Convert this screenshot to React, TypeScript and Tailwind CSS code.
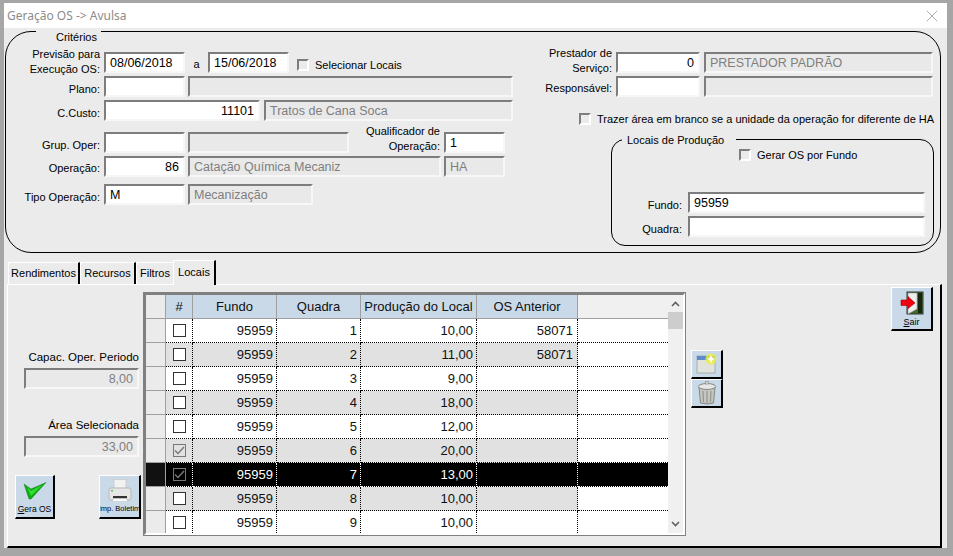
import type { ReactNode } from 'react'
import { X } from 'lucide-react'

const rows = [
  { fundo: '95959', quadra: '1', prod: '10,00', os: '58071', checked: false },
  { fundo: '95959', quadra: '2', prod: '11,00', os: '58071', checked: false },
  { fundo: '95959', quadra: '3', prod: '9,00', os: '', checked: false },
  { fundo: '95959', quadra: '4', prod: '18,00', os: '', checked: false },
  { fundo: '95959', quadra: '5', prod: '12,00', os: '', checked: false },
  { fundo: '95959', quadra: '6', prod: '20,00', os: '', checked: true },
  { fundo: '95959', quadra: '7', prod: '13,00', os: '', checked: true },
  { fundo: '95959', quadra: '8', prod: '10,00', os: '', checked: false },
  { fundo: '95959', quadra: '9', prod: '10,00', os: '', checked: false },
]

function Field({ width, value = '', right, disabled }: { width: string; value?: string; right?: boolean; disabled?: boolean }) {
  return (
    <div
      className={`${width} h-[21px] shrink-0 border-2 border-t-[#7d7d7d] border-l-[#7d7d7d] border-r-[#f7f7f7] border-b-[#f7f7f7] px-[4px] pt-[1px] flex items-center text-[12.5px] leading-none whitespace-nowrap overflow-hidden ${
        disabled ? 'bg-[#e9e9e9] text-[#7f7f7f]' : 'bg-white text-black'
      } ${right ? 'justify-end' : ''}`}
    >
      {value}
    </div>
  )
}

// labels sit a little below the centre of their field, as in the original form
function Label({ width, children }: { width: string; children: ReactNode }) {
  return <div className={`${width} shrink-0 text-right text-[11px] leading-[15px] text-black`}>{children}</div>
}

function Check({ label, className = '' }: { label: string; className?: string }) {
  return (
    <div className={`flex items-center h-[14px] text-[11px] text-black whitespace-nowrap ${className}`}>
      <span className="w-[12px] h-[12px] mr-[6px] border-2 border-t-[#7d7d7d] border-l-[#7d7d7d] border-r-white border-b-white bg-[#ebebeb]" />
      {label}
    </div>
  )
}

function ToolButton({ width, height, children, className = '' }: { width: string; height: string; children: ReactNode; className?: string }) {
  return (
    <div
      className={`${width} ${height} shrink-0 bg-[#c9d9e8] border border-t-white border-l-white border-r-black border-b-black border-r-2 border-b-2 flex flex-col items-center overflow-hidden ${className}`}
    >
      {children}
    </div>
  )
}

function CheckIcon() {
  return (
    <svg width="24" height="18" viewBox="0 0 24 18">
      <path d="M1 2 L8 7 L23 0.5 L8 17 L6 17 Z" fill="#12a818" stroke="#0c8a10" strokeWidth="0.5" />
      <path d="M4 5 L8 9 L19 3 L8 14 Z" fill="#2fe02f" />
    </svg>
  )
}

function PrinterIcon() {
  return (
    <svg width="24" height="24" viewBox="0 0 24 24">
      <rect x="6" y="0.5" width="12" height="11" fill="#f2f2f2" stroke="#d0d0d0" />
      <path d="M3 9 H21 Q23 9 23 12 V18 Q23 21 21 21 H3 Q1 21 1 18 V12 Q1 9 3 9 Z" fill="#e6e6e6" stroke="#b8b8b8" />
      <rect x="5" y="17" width="14" height="2.5" fill="#333333" />
      <rect x="5" y="19.5" width="14" height="3" fill="#fafafa" stroke="#c4c4c4" strokeWidth="0.5" />
      <rect x="3" y="11" width="2" height="1.5" fill="#57c957" />
    </svg>
  )
}

function ExitIcon() {
  return (
    <svg width="24" height="24" viewBox="0 0 24 24">
      <rect x="7" y="1" width="16" height="22" fill="#3f6a2c" stroke="#333333" />
      <rect x="18" y="2" width="4" height="20" fill="#16260f" />
      <path d="M8 2 H17 V18 L8 23 Z" fill="#eeeeee" stroke="#9a9a9a" strokeWidth="0.6" />
      <path d="M1 9 H8 V5.5 L15 12 L8 17.5 V14.5 H1 Z" fill="#f00010" stroke="#a80008" strokeWidth="0.6" />
    </svg>
  )
}

function NewIcon() {
  return (
    <svg width="22" height="22" viewBox="0 0 22 22">
      <rect x="1" y="3" width="18" height="17" fill="#dfe3dc" stroke="#a8adb0" />
      <rect x="1" y="3" width="18" height="4" fill="#5c8ccc" />
      <circle cx="15" cy="6" r="5.5" fill="#eef03a" opacity="0.8" />
      <path d="M15 2 L16.2 4.8 L19 6 L16.2 7.2 L15 10 L13.8 7.2 L11 6 L13.8 4.8 Z" fill="#ffffff" />
    </svg>
  )
}

function TrashIcon() {
  return (
    <svg width="20" height="24" viewBox="0 0 20 24">
      <path d="M2 6 H18 L16.5 22 Q10 24 3.5 22 Z" fill="#c4c6c2" stroke="#85877f" />
      <ellipse cx="10" cy="5.5" rx="8.5" ry="3" fill="#e6e6e6" stroke="#85877f" />
      <rect x="8.5" y="0.5" width="3" height="2.5" fill="#d8d8d8" stroke="#85877f" strokeWidth="0.6" />
      <path d="M6 10 L6.5 21 M10 10 V22 M14 10 L13.5 21" stroke="#8c8e86" strokeWidth="1" fill="none" />
    </svg>
  )
}

function Grid() {
  return (
    <div className="w-[543px] h-[244px] mt-[7px] ml-0 shrink-0 border border-[#808080] bg-[#ebebeb]">
      <div className="w-[541px] h-[242px] border-2 border-t-[#808080] border-l-[#808080] border-r-white border-b-white flex overflow-hidden">
        <div className="w-[522px] h-[238px] shrink-0 overflow-hidden text-[13px] text-[#111111]">
          <div className="flex h-[24px] bg-[#f0f0f0] border-b border-[#a0a0a0] text-center leading-[23px]">
            <div className="w-[20px] shrink-0 bg-[#ebebeb] border-r border-[#a0a0a0]" />
            <div className="w-[27px] shrink-0 bg-[#c9d9e8] border-r border-[#a0a0a0]">#</div>
            <div className="w-[84px] shrink-0 bg-[#c9d9e8] border-r border-[#a0a0a0]">Fundo</div>
            <div className="w-[84px] shrink-0 bg-[#c9d9e8] border-r border-[#a0a0a0]">Quadra</div>
            <div className="w-[116px] shrink-0 bg-[#c9d9e8] border-r border-[#a0a0a0] whitespace-nowrap">Produção do Local</div>
            <div className="w-[101px] shrink-0 bg-[#c9d9e8] border-r border-[#a0a0a0]">OS Anterior</div>
          </div>
          {rows.map((row, i) => {
            const selected = i === 6
            const rowBg = selected ? 'bg-black text-white' : i % 2 === 1 ? 'bg-[#e1e1e1]' : 'bg-white'
            const line = selected ? 'border-white' : 'border-black'
            return (
              <div key={row.quadra} className={`flex h-[24px] leading-[23px] ${selected ? 'bg-black' : 'bg-white'}`}>
                <div className={`w-[20px] shrink-0 border-r border-b border-[#a0a0a0] ${selected ? 'bg-[#111111]' : 'bg-[#ebebeb]'}`} />
                <div className={`w-[27px] shrink-0 border-r border-b border-dotted ${line} ${rowBg} flex items-center justify-center pb-[1px]`}>
                  {row.checked ? (
                    <span className="w-[13px] h-[13px] border border-[#777777] flex items-center justify-center">
                      <svg width="11" height="9" viewBox="0 0 11 9">
                        <path d="M1 4.5 L4 7.5 L10 1" fill="none" stroke="#777777" strokeWidth="1.4" />
                      </svg>
                    </span>
                  ) : (
                    <span className="w-[13px] h-[13px] border border-[#333333] bg-white" />
                  )}
                </div>
                <div className={`w-[84px] shrink-0 border-r border-b border-dotted ${line} ${rowBg} text-right pr-[3px]`}>{row.fundo}</div>
                <div className={`w-[84px] shrink-0 border-r border-b border-dotted ${line} ${rowBg} text-right pr-[3px]`}>{row.quadra}</div>
                <div className={`w-[116px] shrink-0 border-r border-b border-dotted ${line} ${rowBg} text-right pr-[3px]`}>{row.prod}</div>
                <div className={`w-[101px] shrink-0 border-r border-b border-dotted ${line} ${rowBg} text-right pr-[4px]`}>{row.os}</div>
                <div className={`flex-1 border-b border-dotted ${selected ? 'border-white bg-black' : 'border-black bg-white'}`} />
              </div>
            )
          })}
        </div>
        {/* scrollbar */}
        <div className="w-[15px] h-[238px] shrink-0 bg-[#f0f0f0] flex flex-col items-center">
          <svg className="mt-[6px] shrink-0" width="9" height="6" viewBox="0 0 9 6">
            <path d="M1 5 L4.5 1.5 L8 5" fill="none" stroke="#606060" strokeWidth="1.6" />
          </svg>
          <div className="w-[15px] h-[17px] mt-[5px] bg-[#cdcdcd]" />
          <svg className="mt-auto mb-[6px] shrink-0" width="9" height="6" viewBox="0 0 9 6">
            <path d="M1 1 L4.5 4.5 L8 1" fill="none" stroke="#606060" strokeWidth="1.6" />
          </svg>
        </div>
      </div>
    </div>
  )
}

export default function App() {
  return (
    <div className="w-[953px] h-[556px] bg-[#a6a6a6] pt-[3px] pl-[4px] overflow-hidden font-['Liberation_Sans',Arial,sans-serif]">
      <div className="w-[943px] h-[545px] bg-[#ebebeb] flex flex-col">
        {/* title bar */}
        <div className="h-[25px] shrink-0 bg-white flex items-center justify-between pl-[3px] pr-[5px]">
          <span className="text-[12px] text-[#8c8c8c] font-['Noto_Sans',sans-serif]">Geração OS -&gt; Avulsa</span>
          <X size={20} strokeWidth={0.8} className="text-[#808080]" />
        </div>

        {/* Critérios */}
        <div className="relative ml-[1px] mt-[3px] w-[936px] h-[222px] shrink-0 rounded-[26px] border border-black flex pt-[20px]">
          <div className="absolute left-[30px] top-[-1px] w-[65px] h-[14px] bg-[#ebebeb] text-[11px] leading-[12px] pl-[20px] whitespace-nowrap">Critérios</div>

          <div className="w-[524px] shrink-0 flex flex-col">
            <div className="flex items-end h-[21px]">
              <Label width="w-[94px] mr-[4px] mb-[-4px]">Previsão para Execução OS:</Label>
              <Field width="w-[81px]" value="08/06/2018" />
              <span className="w-[23px] text-center text-[11px] mb-[1px]">a</span>
              <Field width="w-[81px]" value="15/06/2018" />
              <Check label="Selecionar Locais" className="ml-[8px] mb-[1px]" />
            </div>
            <div className="flex items-center mt-[3px] h-[21px]">
              <Label width="w-[94px] mr-[4px] mt-[5px]">Plano:</Label>
              <Field width="w-[81px]" />
              <Field width="w-[325px] ml-[3px]" disabled />
            </div>
            <div className="flex items-center mt-[3px] h-[21px]">
              <Label width="w-[94px] mr-[4px] mt-[5px]">C.Custo:</Label>
              <Field width="w-[156px]" value="11101" right />
              <Field width="w-[249px] ml-[4px]" value="Tratos de Cana Soca" disabled />
            </div>
            <div className="flex items-end mt-[11px] h-[21px]">
              <Label width="w-[94px] mr-[4px]">Grup. Oper:</Label>
              <Field width="w-[81px]" />
              <Field width="w-[161px] ml-[3px]" disabled />
              <Label width="w-[91px] mb-[-1px]">Qualificador de Operação:</Label>
              <Field width="w-[61px] ml-[4px]" value="1" />
            </div>
            <div className="flex items-center mt-[3px] h-[21px]">
              <Label width="w-[94px] mr-[4px] mt-[4px]">Operação:</Label>
              <Field width="w-[81px]" value="86" right />
              <Field width="w-[253px] ml-[3px]" value="Catação Química Mecaniz" disabled />
              <Field width="w-[61px] ml-[3px]" value="HA" disabled />
            </div>
            <div className="flex items-center mt-[7px] h-[21px]">
              <Label width="w-[94px] mr-[4px] mt-[5px]">Tipo Operação:</Label>
              <Field width="w-[81px]" value="M" />
              <Field width="w-[125px] ml-[3px]" value="Mecanização" disabled />
            </div>
          </div>

          <div className="flex-1 flex flex-col">
            <div className="flex items-end h-[21px]">
              <Label width="w-[82px] mr-[4px] mb-[-3px]">Prestador de Serviço:</Label>
              <Field width="w-[84px]" value="0" right />
              <Field width="w-[229px] ml-[4px]" value="PRESTADOR PADRÃO" disabled />
            </div>
            <div className="flex items-center mt-[3px] h-[21px]">
              <Label width="w-[82px] mr-[4px] mt-[3px]">Responsável:</Label>
              <Field width="w-[84px]" />
              <Field width="w-[229px] ml-[4px]" disabled />
            </div>
            <Check label="Trazer área em branco se a unidade da operação for diferente de HA" className="ml-[49px] mt-[15px] mb-[-1px]" />

            {/* Locais de Produção */}
            <div className="relative mt-[14px] ml-[81px] w-[323px] h-[107px] rounded-[14px] border border-black">
              <div className="absolute left-[10px] top-[-7px] w-[114px] h-[14px] bg-[#ebebeb] text-[11px] leading-[14px] pl-[5px]">Locais de Produção</div>
              <Check label="Gerar OS por Fundo" className="ml-[127px] mt-[8px]" />
              <div className="flex items-center mt-[30px] h-[21px]">
                <Label width="w-[70px] mr-[6px] mt-[5px]">Fundo:</Label>
                <Field width="w-[237px]" value="95959" />
              </div>
              <div className="flex items-center mt-[3px] h-[21px]">
                <Label width="w-[70px] mr-[6px] mt-[5px]">Quadra:</Label>
                <Field width="w-[237px]" />
              </div>
            </div>
          </div>
        </div>

        {/* tabs */}
        <div className="flex items-end h-[25px] mt-[6px] ml-[4px] shrink-0 text-[11px] text-black">
          <div className="h-[22px] w-[72px] border-t border-l border-t-white border-l-white border-r-2 border-r-black flex items-center justify-center">Rendimentos</div>
          <div className="h-[22px] w-[56px] border-t border-l border-t-white border-l-white border-r-2 border-r-black flex items-center justify-center">Recursos</div>
          <div className="h-[22px] w-[37px] border-t border-l border-t-white border-l-white flex items-center justify-center">Filtros</div>
          <div className="h-[25px] w-[43px] border-t border-l border-t-white border-l-white border-r-2 border-r-black flex items-start justify-center pt-[3px] relative top-[1px] z-10 bg-[#ebebeb]">Locais</div>
        </div>

        {/* tab panel */}
        <div className="ml-[3px] w-[935px] flex-1 min-h-0 border-t border-l border-t-white border-l-white border-r-2 border-b-2 border-r-black border-b-black flex">
          <div className="w-[135px] shrink-0 flex flex-col text-[11px] text-black">
            <div className="mt-[65px] h-[14px] pr-[4px] text-right text-[11.5px] leading-[14px] whitespace-nowrap">Capac. Oper. Periodo</div>
            <Field width="w-[115px] ml-[16px] mt-[4px]" value="8,00" right disabled />
            <div className="mt-[29px] h-[14px] pr-[4px] text-right text-[11.5px] leading-[14px] whitespace-nowrap">Área Selecionada</div>
            <Field width="w-[115px] ml-[16px] mt-[4px]" value="33,00" right disabled />
            <div className="flex mt-[18px] ml-[7px]">
              <ToolButton width="w-[40px]" height="h-[44px]">
                <span className="mt-[6px] h-[18px]"><CheckIcon /></span>
                <span className="text-[8.5px] leading-none mt-[5px]"><span className="underline">G</span>era OS</span>
              </ToolButton>
              <ToolButton width="w-[42px] ml-[44px]" height="h-[44px]">
                <span className="mt-[3px] h-[24px]"><PrinterIcon /></span>
                <span className="text-[7.5px] leading-none mt-[2px] whitespace-nowrap">Imp. Boletim</span>
              </ToolButton>
            </div>
          </div>

          <Grid />

          <div className="ml-[5px] mt-[65px] flex flex-col shrink-0">
            <ToolButton width="w-[32px]" height="h-[29px]" className="justify-center"><NewIcon /></ToolButton>
            <ToolButton width="w-[32px]" height="h-[29px]" className="justify-center"><TrashIcon /></ToolButton>
          </div>

          <div className="ml-[168px] mt-[2px] shrink-0">
            <ToolButton width="w-[42px]" height="h-[44px]">
              <span className="mt-[3px] h-[24px]"><ExitIcon /></span>
              <span className="text-[9px] leading-none mt-[3px]"><span className="underline">S</span>air</span>
            </ToolButton>
          </div>
        </div>
      </div>
    </div>
  )
}
